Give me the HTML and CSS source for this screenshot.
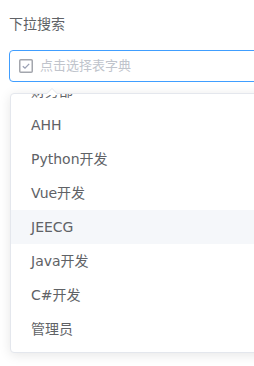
FILE: index.html
```html
<!DOCTYPE html>
<html>
<head>
<meta charset="utf-8">
<link rel="stylesheet" href="styles.css">
</head>
<body>
<div class="page">
  <div class="label">下拉搜索</div>
  <div class="select">
    <div class="input">
      <span class="prefix">
        <svg width="14" height="14" viewBox="0 0 14 14">
          <rect x="0.75" y="0.75" width="12.5" height="12.5" rx="1" fill="none" stroke="#a3a6ad" stroke-width="1.5"/>
          <path d="M3.8 7.2 L6 9.2 L10.2 4.9" fill="none" stroke="#9aa0b4" stroke-width="1.3"/>
        </svg>
      </span>
      <span class="placeholder">点击选择表字典</span>
    </div>
    <div class="dropdown">
      <span class="arrow"></span>
      <div class="viewport">
        <ul class="list">
          <li class="item">财务部</li>
          <li class="item">AHH</li>
          <li class="item">Python开发</li>
          <li class="item">Vue开发</li>
          <li class="item hover">JEECG</li>
          <li class="item">Java开发</li>
          <li class="item">C#开发</li>
          <li class="item">管理员</li>
        </ul>
      </div>
    </div>
  </div>
</div>
</body>
</html>
```

FILE: styles.css
```css
html, body {
  margin: 0;
  padding: 0;
  background: #ffffff;
  overflow: hidden;
}
body {
  width: 254px;
  height: 366px;
  font-family: "DejaVu Sans", "Noto Sans CJK SC", sans-serif;
}
.page {
  padding: 14px 0 0 9px;
  width: 320px;
}
.label {
  font-size: 14px;
  line-height: 20px;
  color: #606266;
  height: 20px;
}
.select {
  margin-top: 16px;
  position: relative;
}
.input {
  box-sizing: border-box;
  height: 32px;
  border: 1px solid #409eff;
  border-radius: 4px;
  display: flex;
  align-items: center;
  padding-left: 30px;
  position: relative;
  background: #fff;
}
.prefix {
  position: absolute;
  left: 9px;
  top: 8px;
  width: 14px;
  height: 14px;
  display: flex;
}
.placeholder {
  font-size: 13px;
  color: #c0c4cc;
  line-height: 30px;
}
.dropdown {
  margin-top: 11px;
  margin-left: 1px;
  border: 1px solid #e4e7ed;
  border-radius: 4px;
  box-shadow: 0 2px 12px 0 rgba(0, 0, 0, 0.1);
  background: #fff;
  position: relative;
}
.arrow {
  position: absolute;
  top: -6px;
  left: 35px;
  width: 0;
  height: 0;
  border-left: 6px solid transparent;
  border-right: 6px solid transparent;
  border-bottom: 6px solid #e4e7ed;
}
.arrow::after {
  content: "";
  position: absolute;
  left: -6px;
  top: 1px;
  border-left: 6px solid transparent;
  border-right: 6px solid transparent;
  border-bottom: 6px solid #fff;
}
.viewport {
  height: 258px;
  overflow: hidden;
  border-radius: 4px;
}
.list {
  list-style: none;
  margin: -20px 0 0 0;
  padding: 0 0 6px 0;
}
.item {
  height: 34px;
  line-height: 34px;
  padding: 0 20px;
  font-size: 14px;
  color: #606266;
  white-space: nowrap;
}
.item.hover {
  background: #f5f7fa;
}
```
